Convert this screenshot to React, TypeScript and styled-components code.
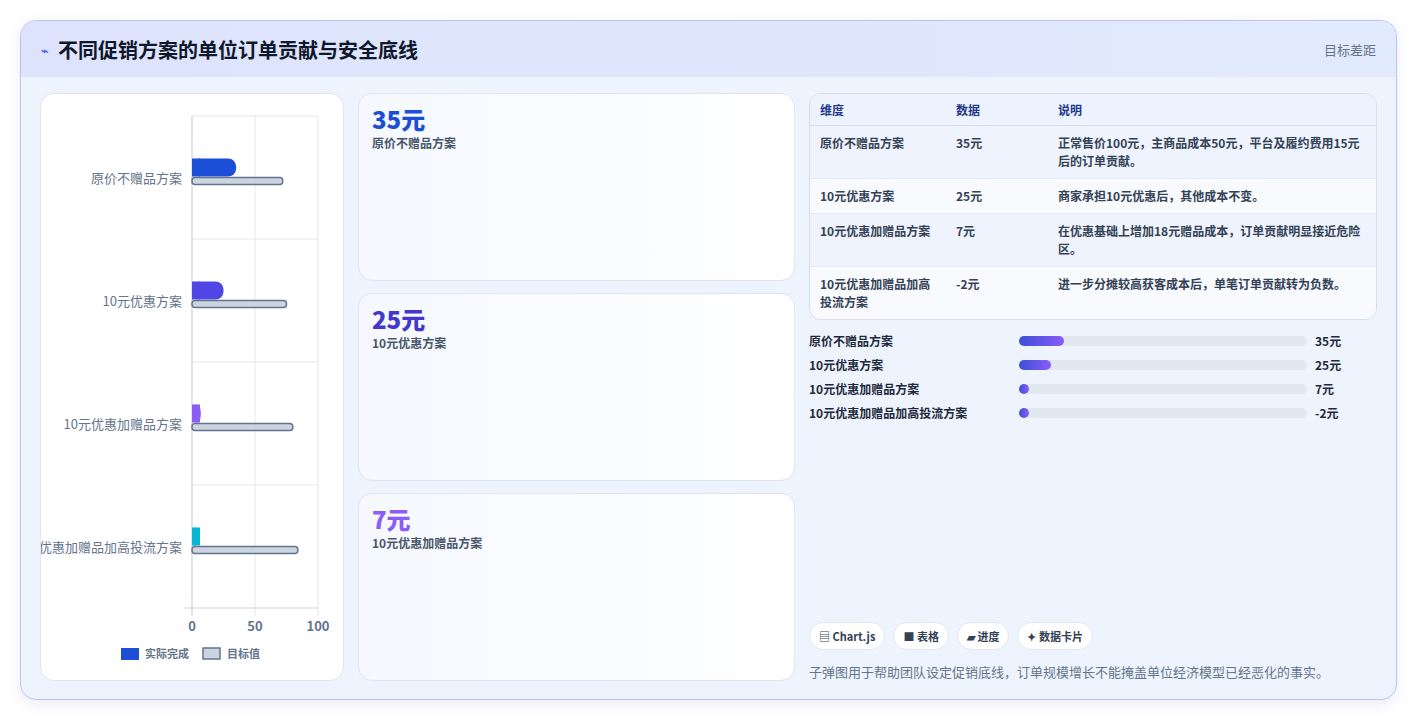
import React from "react";
import styled, { createGlobalStyle } from "styled-components";

const Global = createGlobalStyle`
  body { margin: 0; background: #ffffff; font-family: "Noto Sans CJK SC", "Noto Sans", sans-serif; }
`;

const Page = styled.div`
  padding: 20px;
  height: 720px;
  box-sizing: border-box;
`;

const Frame = styled.div`
  height: 680px;
  box-sizing: border-box;
  border: 1px solid #b9c3ef;
  border-radius: 16px;
  background: #eef4fe;
  overflow: hidden;
  display: flex;
  flex-direction: column;
  box-shadow: 0 4px 14px rgba(80, 100, 180, 0.12);
`;

const Header = styled.div`
  height: 56px;
  flex: none;
  display: flex;
  align-items: center;
  justify-content: space-between;
  padding: 0 20px;
  background: linear-gradient(90deg, #dde3fd, #e2eafd);
`;

const Title = styled.h1`
  margin: 0;
  font-size: 20px;
  font-weight: 700;
  color: #0f172a;
  display: flex;
  align-items: center;
  gap: 10px;
`;

const Mark = styled.span`
  color: #4f6ae8;
  font-size: 12px;
`;

const HeaderNote = styled.span`
  font-size: 13px;
  color: #64748b;
`;

const Body = styled.div`
  flex: 1;
  display: grid;
  grid-template-columns: 304px 437px 1fr;
  gap: 14px;
  padding: 16px 19px 18px 19px;
  min-height: 0;
`;

const Card = styled.div`
  background: #ffffff;
  border: 1px solid #dfe5f1;
  border-radius: 14px;
  box-sizing: border-box;
`;

const ChartCard = styled(Card)`
  overflow: hidden;
`;

const Stack = styled.div`
  display: grid;
  grid-template-rows: repeat(3, 1fr);
  gap: 12px;
`;

const StatCard = styled(Card)`
  padding: 11px 13px;
  background: linear-gradient(90deg, #f5f8fe, #ffffff);
`;

const StatValue = styled.div<{ $c: string }>`
  font-size: 24px;
  font-weight: 800;
  color: ${(p) => p.$c};
  line-height: 28px;
`;

const StatLabel = styled.div`
  font-size: 12px;
  font-weight: 600;
  color: #475569;
  margin-top: 1px;
`;

const Right = styled.div`
  display: flex;
  flex-direction: column;
  min-height: 0;
`;

const Table = styled.table`
  width: 100%;
  border-collapse: separate;
  border-spacing: 0;
  border: 1px solid #d6deec;
  border-radius: 12px;
  overflow: hidden;
  font-size: 12px;
  color: #334155;
  font-weight: 600;
  th {
    text-align: left;
    color: #1e3a8a;
    font-weight: 700;
    padding: 7px 10px 7px;
    background: #edf3fe;
    border-bottom: 1px solid #d6deec;
  }
  td {
    padding: 8px 10px;
    vertical-align: top;
    line-height: 18px;
    border-bottom: 1px solid #e3e8f2;
  }
  tr:last-child td { border-bottom: none; }
  tbody tr:nth-child(odd) td { background: #eef3fd; }
  tbody tr:nth-child(even) td { background: #f8fafe; }
`;

const Bars = styled.div`
  margin-top: 12px;
  display: flex;
  flex-direction: column;
  gap: 10px;
`;

const BarRow = styled.div`
  display: grid;
  grid-template-columns: 202px 288px 1fr;
  align-items: center;
  gap: 8px;
  font-size: 12px;
  font-weight: 700;
  color: #1e293b;
  height: 14px;
`;

const Track = styled.div`
  height: 10px;
  border-radius: 5px;
  background: #e2e8f0;
`;

const Fill = styled.div`
  height: 10px;
  border-radius: 5px;
  min-width: 10px;
  background: linear-gradient(90deg, #3b4fd8, #8b5cf6);
`;

const Spacer = styled.div`
  flex: 1;
`;

const Tags = styled.div`
  display: flex;
  gap: 8px;
`;

const Tag = styled.span`
  background: #ffffff;
  border: 1px solid #e2e8f0;
  border-radius: 14px;
  padding: 5px 9px;
  font-size: 11px;
  font-weight: 700;
  color: #334155;
`;

const Foot = styled.p`
  margin: 12px 0 0;
  font-size: 13px;
  color: #64748b;
`;

const cats = [
  { label: "原价不赠品方案", v: 35, t: 72, c: "#1d4ed8" },
  { label: "10元优惠方案", v: 25, t: 75, c: "#4f46e5" },
  { label: "10元优惠加赠品方案", v: 7, t: 80, c: "#8b5cf6" },
  { label: "10元优惠加赠品加高投流方案", v: 5, t: 84, c: "#06b6d4" },
];

function Chart() {
  const x0 = 151, w = 126, top = 22, rowH = 123;
  const sx = (v: number) => (v / 100) * w;
  return (
    <svg width="304" height="588" style={{ display: "block" }}>
      {[0, 50, 100].map((v) => (
        <line key={v} x1={x0 + sx(v)} x2={x0 + sx(v)} y1={top} y2={top + rowH * 4 + 8} stroke="#e5e7eb" />
      ))}
      {[1, 2, 3].map((i) => (
        <line key={i} x1={x0} x2={x0 + w} y1={top + rowH * i} y2={top + rowH * i} stroke="#e5e7eb" />
      ))}
      <line x1={x0} x2={x0 + w} y1={top} y2={top} stroke="#e5e7eb" />
      <line x1={x0} x2={x0} y1={top} y2={top + rowH * 4 + 8} stroke="#cbd5e1" />
      <line x1={x0 - 8} x2={x0 + w} y1={top + rowH * 4} y2={top + rowH * 4} stroke="#cbd5e1" />
      {cats.map((c, i) => {
        const cy = top + rowH * i + rowH / 2;
        return (
          <g key={c.label}>
            <text x={x0 - 10} y={cy + 5} textAnchor="end" fontSize="13" fill="#64748b">{c.label}</text>
            <rect x={x0} y={cy - 19} width={Math.max(sx(c.v), 6)} height={18} rx={8} fill={c.c} />
            <rect x={x0} y={cy - 19} width={8} height={18} fill={c.c} />
            <rect x={x0} y={cy} width={sx(c.t)} height={7} rx={3} fill="#cbd5e1" stroke="#64748b" strokeWidth="1.5" />
          </g>
        );
      })}
      {[0, 50, 100].map((v) => (
        <text key={v} x={x0 + sx(v)} y={537} textAnchor="middle" fontSize="13" fontWeight="600" fill="#64748b">{v}</text>
      ))}
      <rect x={80} y={554} width={18} height={12} fill="#1d4ed8" />
      <text x={104} y={564} fontSize="11" fontWeight="600" fill="#64748b">实际完成</text>
      <rect x={162} y={554} width={17} height={11} fill="#cbd5e1" stroke="#64748b" strokeWidth="1.5" />
      <text x={186} y={564} fontSize="11" fontWeight="600" fill="#64748b">目标值</text>
    </svg>
  );
}

const rows = [
  ["原价不赠品方案", "35元", "正常售价100元，主商品成本50元，平台及履约费用15元后的订单贡献。"],
  ["10元优惠方案", "25元", "商家承担10元优惠后，其他成本不变。"],
  ["10元优惠加赠品方案", "7元", "在优惠基础上增加18元赠品成本，订单贡献明显接近危险区。"],
  ["10元优惠加赠品加高投流方案", "-2元", "进一步分摊较高获客成本后，单笔订单贡献转为负数。"],
];

const bars = [
  ["原价不赠品方案", 35, "35元"],
  ["10元优惠方案", 25, "25元"],
  ["10元优惠加赠品方案", 0, "7元"],
  ["10元优惠加赠品加高投流方案", 0, "-2元"],
] as const;

export default function App() {
  return (
    <Page>
      <Global />
      <Frame>
        <Header>
          <Title><Mark>⌁</Mark>不同促销方案的单位订单贡献与安全底线</Title>
          <HeaderNote>目标差距</HeaderNote>
        </Header>
        <Body>
          <ChartCard><Chart /></ChartCard>
          <Stack>
            <StatCard><StatValue $c="#1d4ed8">35元</StatValue><StatLabel>原价不赠品方案</StatLabel></StatCard>
            <StatCard><StatValue $c="#4338ca">25元</StatValue><StatLabel>10元优惠方案</StatLabel></StatCard>
            <StatCard><StatValue $c="#8b5cf6">7元</StatValue><StatLabel>10元优惠加赠品方案</StatLabel></StatCard>
          </Stack>
          <Right>
            <Table>
              <colgroup>
                <col style={{ width: 136 }} />
                <col style={{ width: 102 }} />
                <col />
              </colgroup>
              <thead>
                <tr><th>维度</th><th>数据</th><th>说明</th></tr>
              </thead>
              <tbody>
                {rows.map((r) => (
                  <tr key={r[0]}><td>{r[0]}</td><td>{r[1]}</td><td>{r[2]}</td></tr>
                ))}
              </tbody>
            </Table>
            <Bars>
              {bars.map(([l, v, t]) => (
                <BarRow key={l}>
                  <span>{l}</span>
                  <Track><Fill style={{ width: `${v * 0.45}%` }} /></Track>
                  <span>{t}</span>
                </BarRow>
              ))}
            </Bars>
            <Spacer />
            <Tags>
              <Tag>▤ Chart.js</Tag>
              <Tag>■ 表格</Tag>
              <Tag>▰ 进度</Tag>
              <Tag>✦ 数据卡片</Tag>
            </Tags>
            <Foot>子弹图用于帮助团队设定促销底线，订单规模增长不能掩盖单位经济模型已经恶化的事实。</Foot>
          </Right>
        </Body>
      </Frame>
    </Page>
  );
}
